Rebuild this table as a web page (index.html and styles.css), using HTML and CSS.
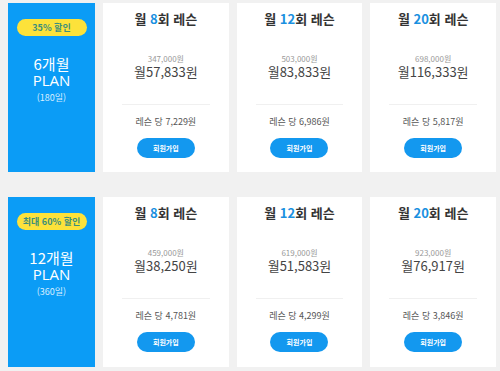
FILE: index.html
```html
<!DOCTYPE html>
<html lang="ko">
<head>
<meta charset="utf-8">
<link rel="stylesheet" href="styles.css">
</head>
<body>
<div class="page">
  <div class="row">
    <div class="plan">
      <div class="badge">35% 할인</div>
      <div class="plan-name">6개월</div>
      <div class="plan-label">PLAN</div>
      <div class="plan-days">(180일)</div>
    </div>
    <div class="card">
      <div class="title">월 <span class="num">8</span>회 레슨</div>
      <div class="orig">347,000원</div>
      <div class="price">월57,833원</div>
      <div class="divider"></div>
      <div class="per">레슨 당 7,229원</div>
      <div class="btn">회원가입</div>
    </div>
    <div class="card">
      <div class="title">월 <span class="num">12</span>회 레슨</div>
      <div class="orig">503,000원</div>
      <div class="price">월83,833원</div>
      <div class="divider"></div>
      <div class="per">레슨 당 6,986원</div>
      <div class="btn">회원가입</div>
    </div>
    <div class="card">
      <div class="title">월 <span class="num">20</span>회 레슨</div>
      <div class="orig">698,000원</div>
      <div class="price">월116,333원</div>
      <div class="divider"></div>
      <div class="per">레슨 당 5,817원</div>
      <div class="btn">회원가입</div>
    </div>
  </div>
  <div class="row row2">
    <div class="plan">
      <div class="badge">최대 60% 할인</div>
      <div class="plan-name">12개월</div>
      <div class="plan-label">PLAN</div>
      <div class="plan-days">(360일)</div>
    </div>
    <div class="card">
      <div class="title">월 <span class="num">8</span>회 레슨</div>
      <div class="orig">459,000원</div>
      <div class="price">월38,250원</div>
      <div class="divider"></div>
      <div class="per">레슨 당 4,781원</div>
      <div class="btn">회원가입</div>
    </div>
    <div class="card">
      <div class="title">월 <span class="num">12</span>회 레슨</div>
      <div class="orig">619,000원</div>
      <div class="price">월51,583원</div>
      <div class="divider"></div>
      <div class="per">레슨 당 4,299원</div>
      <div class="btn">회원가입</div>
    </div>
    <div class="card">
      <div class="title">월 <span class="num">20</span>회 레슨</div>
      <div class="orig">923,000원</div>
      <div class="price">월76,917원</div>
      <div class="divider"></div>
      <div class="per">레슨 당 3,846원</div>
      <div class="btn">회원가입</div>
    </div>
  </div>
</div>
</body>
</html>
```
FILE: styles.css
```css
html, body {
  margin: 0;
  padding: 0;
  background: #f1f1f1;
  font-family: "Noto Sans CJK KR", "Noto Sans", sans-serif;
}
.page {
  padding: 3px 4px 0 8px;
  display: flex;
  flex-direction: column;
  gap: 25px;
}
.row {
  display: grid;
  grid-template-columns: 87px repeat(3, 1fr);
  column-gap: 8px;
  height: 169px;
}
.row2 {
  height: 170px;
}
.plan {
  background: #0b9cf6;
  display: flex;
  flex-direction: column;
  align-items: center;
  padding-top: 16px;
  color: #fff;
}
.badge {
  width: 70px;
  height: 17px;
  border-radius: 9px;
  background: #fde23a;
  color: #3d8f7c;
  font-size: 9px;
  font-weight: 700;
  line-height: 17px;
  text-align: center;
}
.plan-name {
  margin-top: 19px;
  font-size: 15px;
  line-height: 17px;
}
.plan-label {
  font-family: "Open Sans", sans-serif;
  font-size: 15px;
  line-height: 17px;
}
.plan-days {
  margin-top: 3px;
  font-size: 9px;
  line-height: 12px;
  color: #d8eeff;
}
.card {
  background: #fff;
  display: flex;
  flex-direction: column;
  align-items: center;
  padding-top: 8px;
}
.title {
  font-size: 13px;
  font-weight: 700;
  line-height: 16px;
  color: #333;
}
.num {
  color: #1a90e0;
}
.orig {
  margin-top: 27px;
  font-size: 8px;
  line-height: 10px;
  color: #999;
}
.price {
  font-size: 13px;
  line-height: 16px;
  color: #444;
}
.divider {
  margin-top: 24px;
  width: calc(100% - 38px);
  height: 1px;
  background: #f0f0f0;
}
.per {
  margin-top: 11px;
  font-size: 9px;
  line-height: 12px;
  color: #555;
}
.btn {
  margin-top: 10px;
  width: 58px;
  height: 20px;
  border-radius: 10px;
  background: #1398ef;
  color: #fff;
  font-size: 7px;
  font-weight: 700;
  line-height: 20px;
  text-align: center;
}
```
